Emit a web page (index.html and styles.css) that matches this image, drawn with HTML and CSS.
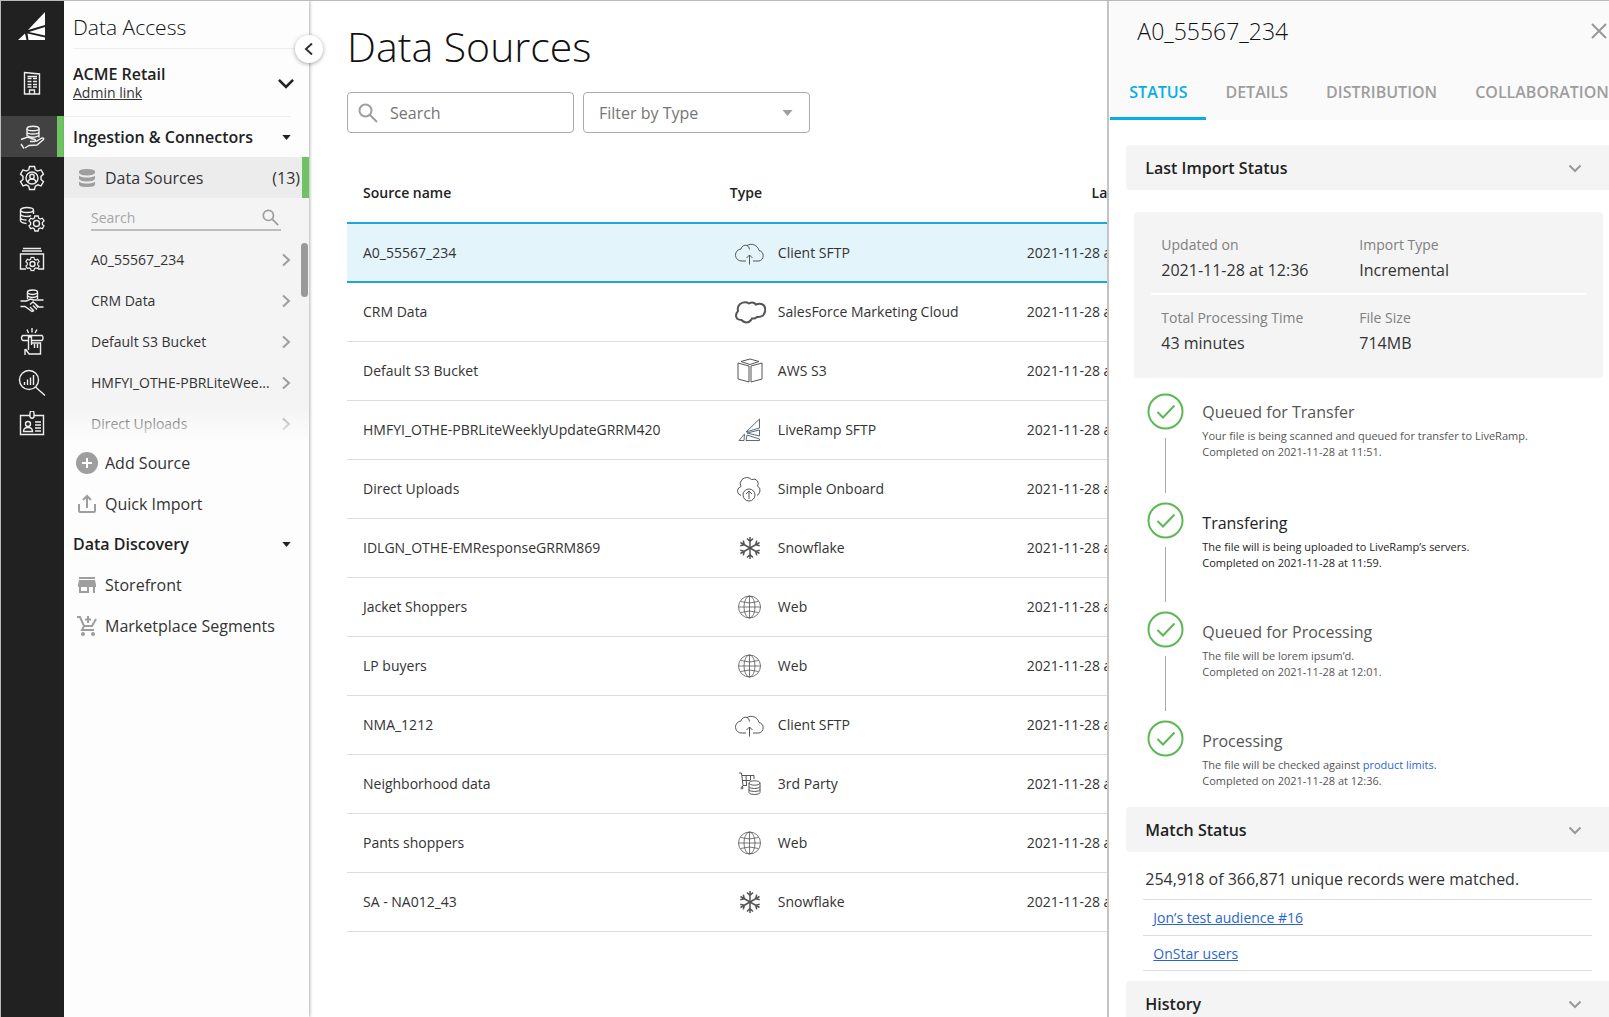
FILE: index.html
```html
<!DOCTYPE html>
<html lang="en">
<head>
<meta charset="utf-8">
<meta name="viewport" content="width=device-width, initial-scale=1.0">
<title>Data Sources</title>
<link rel="stylesheet" href="styles.css">
</head>
<body>
<svg class="sprite" aria-hidden="true">
    <symbol id="cloud-up" viewBox="0 0 36 36">
        <path d="M16 26H12a6 6 0 0 1-1-12 4.500 4.500 0 0 1 6-3.500 8 8 0 0 1 12 5 5.400 5.400 0 0 1 0 10.500H23M17 10.500q2.500 1.200 2.500 4M19.500 29.500V20M16.500 23l3-3 3 3"/>
    </symbol>
    <symbol id="salesforce" viewBox="0 0 36 36">
        <path stroke-width="2" d="M19 9.500q4-2.500 7 1 5-2 8 1 3 5-1 10-3 2-6 1.500-2 2-5 1.500-2 4-6 4-3-.8-4.500-2.500-5 0-5.500-4 0-3 2-5-1-4 2-7 5-3 9-.5z"/>
    </symbol>
    <symbol id="s3" viewBox="0 0 36 36">
        <path d="M11 8.500l9-2.500 9 2.500-9 3zM8 10l11 3v16L8 26zM32 10l-11 3v16l11-3z"/>
    </symbol>
    <symbol id="ramp" viewBox="0 0 36 36">
        <path stroke="#5d6b78" d="M29.500 7v9L16 20zM29.500 18v6L17 21zM17 23l12.500 4v1.500H16zM14.500 22l-5.500 6.500h5z"/>
    </symbol>
    <symbol id="onboard" viewBox="0 0 36 36">
        <path d="M11 24.500Q7 23 7.500 19.500 8 16.500 11 15.500 8.500 12 12 8.500q5-4 9.500 0 4-1.500 6 1.500 1.500 3 0 5 3 2 2.500 5-.5 3-3 4.500"/>
        <circle cx="19" cy="24" r="6"/>
        <path d="M19 28v-8M16 23l3-3 3 3"/>
    </symbol>
    <symbol id="snow" viewBox="0 0 36 36">
        <g stroke-width="1.5">
            <path id="flake-arm" d="M20 18V7M17 8.500l3 3 3-3"/>
            <use href="#flake-arm" transform="rotate(60 20 18)"/>
            <use href="#flake-arm" transform="rotate(120 20 18)"/>
            <use href="#flake-arm" transform="rotate(180 20 18)"/>
            <use href="#flake-arm" transform="rotate(240 20 18)"/>
            <use href="#flake-arm" transform="rotate(300 20 18)"/>
        </g>
    </symbol>
    <symbol id="globe" viewBox="0 0 36 36">
        <g stroke-width=".8">
            <circle cx="19.500" cy="18" r="11"/>
            <ellipse cx="19.500" cy="18" rx="5.500" ry="11"/>
            <path d="M19.500 7v22M8.500 18h22M10.500 12.500q9 3 18 0M10.500 23.500q9-3 18 0"/>
        </g>
    </symbol>
    <symbol id="cart-db" viewBox="0 0 36 36">
        <path d="M9 7h2.500l1.500 12.500h4M12 9.500h12v3.500M12.500 14.500H20M16 9.500l.5 10M20.500 9.500v5M13 19.500l-1 2"/>
        <circle cx="12" cy="22" r="1"/>
        <ellipse cx="24.500" cy="17" rx="5.500" ry="2.200"/>
        <path d="M19 17v9.500q0 2 5.500 2t5.500-2V17M19 20.500q0 2 5.500 2t5.500-2M19 23.500q0 2 5.500 2t5.500-2"/>
    </symbol>
    <symbol id="chev-right" viewBox="0 0 14 14"><path d="M4 1.500L10 7l-6 5.500"/></symbol>
    <symbol id="chev-down" viewBox="0 0 14 14"><path d="M1.500 4.500L7 10l5.500-5.500"/></symbol>
    <symbol id="caret" viewBox="0 0 10 6"><path d="M0 0h10L5 6z"/></symbol>
    <symbol id="lens" viewBox="0 0 20 20"><circle cx="7.500" cy="7.500" r="6"/><path d="M12 12l7 7"/></symbol>
    <symbol id="gear" viewBox="0 0 26 26">
        <path d="M10.500 1.500h5l.8 3.300 2.500 1.300 3.200-1.200 2.500 4.200-2.500 2.300v3l2.500 2.300-2.500 4.200-3.200-1.100-2.500 1.400-.8 3.300h-5l-.8-3.300-2.500-1.400L4 20.900l-2.500-4.200L4 14.400v-3L1.500 9.100 4 4.900l3.200 1.200 2.500-1.300z"/>
    </symbol>
    <symbol id="done" viewBox="0 0 38 38"><circle cx="18.500" cy="18.500" r="17"/><path d="M10.500 19l5.500 5.500L27.500 12.500"/></symbol>
</svg>

<div class="app">
    <nav class="rail" aria-label="Main">
        <a class="rail-logo" href="#" aria-label="Home">
            <svg width="28" height="28" viewBox="0 0 28 28"><path d="M27 0v13L10 18zM27 15v8.500L11 20zM9.500 21.500L27 25.500V28H10.500zM7 21.500l1.500 6.500H0z"/></svg>
        </a>
        <a class="rail-org" href="#" aria-label="Organization">
            <svg width="26" height="26" viewBox="0 0 26 26"><path d="M5.500 2.500l15 1.500v20h-15zM8.500 8.500h4M14 8.500h4M8.500 11.500h4M14 11.500h4M8.500 14.500h4M14 14.500h4M8.500 6.500h9.500M8.500 17h4M14 17h4M10.500 24v-4h5v4"/></svg>
        </a>
        <a class="rail-item active" href="#" aria-label="Data access">
            <svg width="26" height="26" viewBox="0 0 26 26"><ellipse cx="14" cy="4.500" rx="6" ry="2.300"/><path d="M8 4.500v8M20 4.500v9M8 8q0 2 6 2t6-2M8 11.500q6 3.500 12 0M2 15.500l4-1.500q3-1.500 6 .5l4 1q1.500 1-.5 2H11M17 17.500l6-3.500q2.500-.3 1.500 1.500L18 21l-8 .5L6 24M2 20l3 4.500"/></svg>
        </a>
        <a class="rail-item" href="#" aria-label="Identity">
            <svg width="26" height="26" viewBox="0 0 26 26"><use href="#gear"/><circle cx="13" cy="13" r="6"/><circle cx="13" cy="11.500" r="2.200"/><path d="M9 17q.5-3 4-3t4 3"/></svg>
        </a>
        <a class="rail-item" href="#" aria-label="Data settings">
            <svg width="26" height="26" viewBox="0 0 26 26"><ellipse cx="8" cy="4" rx="6.500" ry="2.500"/><path d="M1.500 4v11q1 2 6 2.500M14.500 4v4M1.500 8q1 2.500 6.500 2.500 3 0 4-1M1.500 12q1 2 6 2"/><use href="#gear" x="9" y="9" width="17" height="17" stroke-width="2"/><circle cx="17.500" cy="17.500" r="3"/></svg>
        </a>
        <a class="rail-item" href="#" aria-label="Workflows">
            <svg width="26" height="26" viewBox="0 0 26 26"><path d="M4 1.500h18M3 4h20M7 22H1.500V7h23v15H19"/><use href="#gear" x="6" y="9.500" width="15" height="15" stroke-width="2"/><circle cx="13.500" cy="17" r="2.500"/></svg>
        </a>
        <a class="rail-item" href="#" aria-label="Collaboration">
            <svg width="26" height="26" viewBox="0 0 26 26"><path d="M8.500 11V4q0-2 5-2t5 2v7M8.500 5q5 3 10 0M8.500 8q5 3 10 0M1.500 13h6l4-2 3 1h10M1.500 18.500H6l7 5 2-1M24.500 19H20l-6-5-3 2.500M11 19l4 4M14 17.500l4 4M16.500 16l2.500 3.500"/></svg>
        </a>
        <a class="rail-item" href="#" aria-label="Activation">
            <svg width="26" height="28" viewBox="0 0 26 28"><path d="M9.500 5L8 1.500M13 4.500V0M16 5l2-3.500M9 12.500H4Q2.500 12 2.500 10T4 7.500h19q1 .5 1 2.500t-1 2.500H13M9.500 22V9h3v8M13 15h8.500v11H10l-3.500-5M15.500 16v4M18.500 16v4M6 21v6"/></svg>
        </a>
        <a class="rail-item" href="#" aria-label="Measurement">
            <svg width="28" height="28" viewBox="0 0 28 28"><circle cx="11" cy="11" r="9.500"/><path d="M17.500 18L27 26.500M6.500 16v-3M9.500 16v-5.500M12.500 16V8.500M15.500 16V6"/></svg>
        </a>
        <a class="rail-item" href="#" aria-label="Account">
            <svg width="26" height="26" viewBox="0 0 26 26"><path d="M11 4.500H1.500v19h23v-19H15M11 6V2q0-2 2-2t2 2v4q-2 2.500-4 0M16 11h6M16 14h6M16 17h6M16 20h6M4.500 20.500q0-4 4.500-4t4.500 4z"/><circle cx="9" cy="13" r="2.500"/></svg>
        </a>
    </nav>

    <aside class="side">
        <button class="collapse" type="button" aria-label="Collapse menu"><svg width="14" height="14"><use href="#chev-right"/></svg></button>
        <h2 class="side-title">Data Access</h2>
        <div class="account">
            <div>
                <strong>ACME Retail</strong>
                <a href="#">Admin link</a>
            </div>
            <button type="button" aria-label="Switch account"><svg width="18" height="18"><use href="#chev-down"/></svg></button>
        </div>
        <button class="group" type="button">Ingestion &amp; Connectors <svg width="9" height="5"><use href="#caret"/></svg></button>
        <a class="side-link current" href="#">
            <svg width="22" height="22" viewBox="0 0 22 22"><path d="M3 4.500Q3 2 11 2t8 2.500V6q-2 2.500-8 2.500T3 6zM3 8.500q2 2 8 2t8-2V12q-2 2.500-8 2.500T3 12zM3 14.500q2 2 8 2t8-2v3Q19 20 11 20t-8-2.500z"/></svg>
            <span>Data Sources</span>
            <span class="count">(13)</span>
        </a>
        <div class="sources">
            <label class="side-search">
                <input type="text" placeholder="Search" aria-label="Search sources">
                <svg width="17" height="17"><use href="#lens"/></svg>
            </label>
            <ul>
                <li><a href="#"><span>A0_55567_234</span><svg width="14" height="14"><use href="#chev-right"/></svg></a></li>
                <li><a href="#"><span>CRM Data</span><svg width="14" height="14"><use href="#chev-right"/></svg></a></li>
                <li><a href="#"><span>Default S3 Bucket</span><svg width="14" height="14"><use href="#chev-right"/></svg></a></li>
                <li><a href="#"><span>HMFYI_OTHE-PBRLiteWee...</span><svg width="14" height="14"><use href="#chev-right"/></svg></a></li>
                <li><a href="#"><span>Direct Uploads</span><svg width="14" height="14"><use href="#chev-right"/></svg></a></li>
            </ul>
            <div class="scroll-thumb"></div>
        </div>
        <a class="side-link" href="#">
            <svg width="22" height="22" viewBox="0 0 22 22"><circle cx="11" cy="11" r="11"/><path class="plus" d="M11 6v10M6 11h10"/></svg>
            <span>Add Source</span>
        </a>
        <a class="side-link" href="#">
            <svg class="outline" width="22" height="22" viewBox="0 0 22 22"><path d="M3 11v7q0 1 1 1h14q1 0 1-1v-7M11 15V3M7 7l4-4 4 4"/></svg>
            <span>Quick Import</span>
        </a>
        <button class="group" type="button">Data Discovery <svg width="9" height="5"><use href="#caret"/></svg></button>
        <a class="side-link" href="#">
            <svg width="22" height="22" viewBox="0 0 22 22"><path d="M3 3h16v2H3zM3 6h16l1 5v2h-1v6h-2v-6h-4v6H3v-6H2v-2zM5 13v4h6v-4z" fill-rule="evenodd"/></svg>
            <span>Storefront</span>
        </a>
        <a class="side-link" href="#">
            <svg class="outline" width="22" height="22" viewBox="0 0 22 22"><path d="M1 2h3l4 9h8l4-7M8 11l-2 4h12M12 1v7M9 4.500h6"/><circle class="dot" cx="7" cy="19" r="2"/><circle class="dot" cx="17" cy="19" r="2"/></svg>
            <span>Marketplace Segments</span>
        </a>
    </aside>

    <main class="main">
        <h1>Data Sources</h1>
        <div class="filters">
            <label class="field">
                <svg width="20" height="20"><use href="#lens"/></svg>
                <input type="text" placeholder="Search" aria-label="Search">
            </label>
            <label class="field">
                <select aria-label="Filter by Type"><option>Filter by Type</option></select>
                <svg class="field-caret" width="11" height="6"><use href="#caret"/></svg>
            </label>
        </div>
        <table class="grid">
            <thead>
                <tr><th class="col-name">Source name</th><th>Type</th><th class="col-date">La</th></tr>
            </thead>
            <tbody>
                <tr class="selected"><td>A0_55567_234</td><td><div class="type"><svg><use href="#cloud-up"/></svg>Client SFTP</div></td><td class="col-date">2021-11-28 a</td></tr>
                <tr><td>CRM Data</td><td><div class="type"><svg><use href="#salesforce"/></svg>SalesForce Marketing Cloud</div></td><td class="col-date">2021-11-28 a</td></tr>
                <tr><td>Default S3 Bucket</td><td><div class="type"><svg><use href="#s3"/></svg>AWS S3</div></td><td class="col-date">2021-11-28 a</td></tr>
                <tr><td>HMFYI_OTHE-PBRLiteWeeklyUpdateGRRM420</td><td><div class="type"><svg><use href="#ramp"/></svg>LiveRamp SFTP</div></td><td class="col-date">2021-11-28 a</td></tr>
                <tr><td>Direct Uploads</td><td><div class="type"><svg><use href="#onboard"/></svg>Simple Onboard</div></td><td class="col-date">2021-11-28 a</td></tr>
                <tr><td>IDLGN_OTHE-EMResponseGRRM869</td><td><div class="type"><svg><use href="#snow"/></svg>Snowflake</div></td><td class="col-date">2021-11-28 a</td></tr>
                <tr><td>Jacket Shoppers</td><td><div class="type"><svg><use href="#globe"/></svg>Web</div></td><td class="col-date">2021-11-28 a</td></tr>
                <tr><td>LP buyers</td><td><div class="type"><svg><use href="#globe"/></svg>Web</div></td><td class="col-date">2021-11-28 a</td></tr>
                <tr><td>NMA_1212</td><td><div class="type"><svg><use href="#cloud-up"/></svg>Client SFTP</div></td><td class="col-date">2021-11-28 a</td></tr>
                <tr><td>Neighborhood data</td><td><div class="type"><svg><use href="#cart-db"/></svg>3rd Party</div></td><td class="col-date">2021-11-28 a</td></tr>
                <tr><td>Pants shoppers</td><td><div class="type"><svg><use href="#globe"/></svg>Web</div></td><td class="col-date">2021-11-28 a</td></tr>
                <tr><td>SA - NA012_43</td><td><div class="type"><svg><use href="#snow"/></svg>Snowflake</div></td><td class="col-date">2021-11-28 a</td></tr>
            </tbody>
        </table>
    </main>

    <section class="drawer" aria-label="Source details">
        <header class="drawer-head">
            <div class="drawer-title">
                <h2>A0_55567_234</h2>
                <button type="button" aria-label="Close"><svg width="16" height="16" viewBox="0 0 16 16"><path d="M1 1l14 14M15 1L1 15"/></svg></button>
            </div>
            <div class="tabs" role="tablist">
                <button class="active" type="button" role="tab" aria-selected="true">STATUS</button>
                <button type="button" role="tab">DETAILS</button>
                <button type="button" role="tab">DISTRIBUTION</button>
                <button type="button" role="tab">COLLABORATION</button>
            </div>
        </header>

        <button class="accordion" type="button">Last Import Status <svg width="14" height="14"><use href="#chev-down"/></svg></button>
        <div class="summary">
            <dl>
                <div><dt>Updated on</dt><dd>2021-11-28 at 12:36</dd></div>
                <div><dt>Import Type</dt><dd>Incremental</dd></div>
            </dl>
            <dl>
                <div><dt>Total Processing Time</dt><dd>43 minutes</dd></div>
                <div><dt>File Size</dt><dd>714MB</dd></div>
            </dl>
        </div>
        <ol class="steps">
            <li>
                <svg><use href="#done"/></svg>
                <div><h3>Queued for Transfer</h3><p>Your file is being scanned and queued for transfer to LiveRamp.</p><p>Completed on 2021-11-28 at 11:51.</p></div>
            </li>
            <li class="strong">
                <svg><use href="#done"/></svg>
                <div><h3>Transfering</h3><p>The file will is being uploaded to LiveRamp’s servers.</p><p>Completed on 2021-11-28 at 11:59.</p></div>
            </li>
            <li>
                <svg><use href="#done"/></svg>
                <div><h3>Queued for Processing</h3><p>The file will be lorem ipsum’d.</p><p>Completed on 2021-11-28 at 12:01.</p></div>
            </li>
            <li>
                <svg><use href="#done"/></svg>
                <div><h3>Processing</h3><p>The file will be checked against <a href="#">product limits.</a></p><p>Completed on 2021-11-28 at 12:36.</p></div>
            </li>
        </ol>

        <button class="accordion" type="button">Match Status <svg width="14" height="14"><use href="#chev-down"/></svg></button>
        <div class="match">
            <p>254,918 of 366,871 unique records were matched.</p>
            <ul>
                <li><a href="#">Jon’s test audience #16</a></li>
                <li><a href="#">OnStar users</a></li>
            </ul>
        </div>

        <button class="accordion" type="button">History <svg width="14" height="14"><use href="#chev-down"/></svg></button>
    </section>
</div>
</body>
</html>
```

FILE: styles.css
```css
* {
    box-sizing: border-box;
}

body {
    margin: 0;
    color: #333;
    font-family: "Open Sans", "Noto Sans", sans-serif;
    font-size: 14px;
    line-height: 20px;
    background: #fff;
}

h1, h2, h3, p, ul, ol, dl, dd {
    margin: 0;
    padding: 0;
}

ul, ol {
    list-style: none;
}

a {
    color: inherit;
    text-decoration: none;
}

button, input, select {
    margin: 0;
    padding: 0;
    border: 0;
    background: none;
    color: inherit;
    font: inherit;
}

svg {
    flex: none;
    fill: none;
    stroke: currentColor;
}

.sprite {
    position: absolute;
    width: 0;
    height: 0;
}

.app {
    display: grid;
    grid-template-columns: 63px 245px minmax(0, 1fr) 31.2%;
    height: 100vh;
    overflow: hidden;
    border-top: 1px solid #bbb;
    border-left: 1px solid #bbb;
}

/* icon rail */
.rail {
    display: flex;
    flex-direction: column;
    background: #212121;
    color: #eee;
}

.rail a {
    display: flex;
    align-items: center;
    justify-content: center;
    height: 41px;
    flex: none;
    padding-right: 1px;
    stroke-width: 1.4;
}

.rail .rail-logo {
    height: 49px;
}

.rail-logo svg {
    fill: #fff;
    stroke: none;
}

.rail .rail-org {
    height: 66px;
}

.rail .active {
    background: #424242;
    box-shadow: inset -7px 0 #6fc363;
}

/* side menu */
.side {
    position: relative;
    z-index: 1;
    background: #fdfdfd;
    box-shadow: 1px 0 3px rgba(0, 0, 0, 0.3);
}

.side-title {
    margin-left: 9px;
    padding: 14px 0 9px;
    border-bottom: 1px solid #eee;
    color: #111;
    font-size: 21px;
    font-weight: 300;
    line-height: 24px;
}

.collapse {
    position: absolute;
    top: 34px;
    right: -14px;
    display: flex;
    align-items: center;
    justify-content: center;
    width: 28px;
    height: 28px;
    border-radius: 50%;
    background: #fff;
    box-shadow: 0 1px 4px rgba(0, 0, 0, 0.35);
    stroke-width: 2;
}

.collapse svg {
    transform: rotate(180deg);
}

.account {
    display: flex;
    align-items: center;
    justify-content: space-between;
    height: 68px;
    margin-right: 18px;
    padding-left: 9px;
    border-bottom: 1px solid #eee;
}

.account strong {
    display: block;
    color: #222;
    font-size: 16px;
    font-weight: 600;
}

.account a {
    display: block;
    line-height: 18px;
    text-decoration: underline;
}

.account button {
    display: flex;
    margin-right: -4px;
    color: #222;
    stroke-width: 2;
}

.group {
    display: flex;
    align-items: center;
    justify-content: space-between;
    width: 100%;
    height: 40px;
    padding: 0 18px 0 9px;
    color: #222;
    font-size: 16px;
    font-weight: 600;
}

.group svg, .field-caret {
    fill: currentColor;
    stroke: none;
}

.side-link {
    display: flex;
    align-items: center;
    gap: 7px;
    height: 41px;
    padding-left: 12px;
    font-size: 16px;
}

.side-link svg {
    fill: #9e9e9e;
    stroke: none;
}

.side-link .plus {
    stroke: #fff;
    stroke-width: 2;
}

.side-link .outline {
    fill: none;
    stroke: #9e9e9e;
    stroke-width: 2;
}

.side-link .dot {
    fill: #9e9e9e;
    stroke: none;
}

.current {
    padding-right: 9px;
    background: #ececec;
    box-shadow: inset -7px 0 #6fc363;
}

.count {
    margin-left: auto;
}

.sources {
    position: relative;
    height: 244px;
    overflow: hidden;
    background: #f4f4f4;
}

/* the list fades out where it is cut off */
.sources::after {
    content: "";
    position: absolute;
    right: 0;
    bottom: 0;
    left: 0;
    height: 36px;
    background: linear-gradient(rgba(253, 253, 253, 0), #fdfdfd);
}

.side-search {
    display: flex;
    align-items: center;
    height: 33px;
    margin: 0 28px 8px 27px;
    padding-top: 8px;
    padding-right: 2px;
    border-bottom: 2px solid #bdbdbd;
    color: #9e9e9e;
    stroke-width: 2;
}

.side-search input {
    flex: 1;
    min-width: 0;
}

input {
    outline: none;
}

.side-search input::placeholder {
    color: #a6a6a6;
}

.sources li a {
    display: flex;
    align-items: center;
    justify-content: space-between;
    height: 41px;
    padding: 0 16px 0 27px;
}

.sources li svg {
    color: #9e9e9e;
    stroke-width: 2;
}

.scroll-thumb {
    position: absolute;
    top: 45px;
    right: 1px;
    width: 7px;
    height: 54px;
    border-radius: 4px;
    background: #999;
}

/* source list */
.main {
    padding: 17px 0 0 38px;
    overflow: hidden;
}

.main h1 {
    color: #111;
    font-size: 41px;
    font-weight: 300;
    line-height: 56px;
}

.filters {
    display: flex;
    gap: 9px;
    margin-top: 18px;
}

.field {
    display: flex;
    align-items: center;
    gap: 12px;
    flex: 0 1 227px;
    min-width: 0;
    height: 41px;
    padding: 0 16px 0 10px;
    border: 1px solid #aaa;
    border-radius: 4px;
    color: #9e9e9e;
    font-size: 16px;
    stroke-width: 2;
}

.field input, .field select {
    flex: 1;
    min-width: 0;
    color: #757575;
}

.field input::placeholder {
    color: #757575;
}

.field select {
    padding-left: 5px;
    appearance: none;
}

/* runs a little way under the drawer */
.grid {
    width: calc(100% + 4px);
    margin-top: 30px;
    border-collapse: collapse;
}

.grid th, .grid td {
    height: 59px;
    padding: 0 0 0 16px;
    border-bottom: 1px solid #ddd;
    text-align: left;
}

.grid th {
    height: 60px;
    border-bottom: 2px solid #1ba8dc;
    color: #222;
    font-weight: 600;
}

.grid .col-name {
    width: 48%;
}

.grid .col-date {
    padding: 0;
    text-align: right;
}

.grid th.col-date {
    padding-right: 4px;
}

.grid .selected td {
    border-bottom: 2px solid #1ba8dc;
    background: #e3f4fa;
}

.type {
    display: flex;
    align-items: center;
    gap: 12px;
}

.type svg {
    width: 36px;
    height: 36px;
    color: #555;
}

/* details drawer */
.drawer {
    z-index: 1;
    display: flex;
    flex-direction: column;
    overflow: hidden;
    padding-left: 1px;
    border-left: 2px solid #c4c4c4;
    background: #fff;
}

.drawer-head {
    flex: none;
    background: #fafafa;
}

.drawer-title {
    display: flex;
    align-items: center;
    justify-content: space-between;
    height: 60px;
    padding: 0 2px 0 27px;
}

.drawer-title h2 {
    color: #111;
    font-size: 23px;
    font-weight: 300;
}

.drawer-title button {
    display: flex;
    color: #999;
    stroke-width: 2;
}

.tabs {
    display: flex;
}

.tabs button {
    height: 59px;
    padding: 5px 19px 0;
    border-bottom: 3px solid transparent;
    color: #9e9e9e;
    font-size: 16px;
    font-weight: 600;
}

.tabs .active {
    border-bottom-color: #06aee5;
    color: #06aee5;
}

.accordion {
    display: flex;
    align-items: center;
    justify-content: space-between;
    flex: none;
    height: 45px;
    margin-left: 16px;
    padding: 0 27px 0 19px;
    border-radius: 4px 0 0 4px;
    background: #f4f4f4;
    color: #222;
    font-size: 16px;
    font-weight: 600;
}

.accordion svg {
    color: #999;
    stroke-width: 2;
}

.drawer-head + .accordion {
    margin-top: 25px;
}

.summary {
    flex: none;
    margin: 22px 6px 15px 24px;
    padding: 10px 17px 14px;
    border-radius: 4px;
    background: #f4f4f4;
}

.summary dl {
    display: grid;
    grid-template-columns: 198px 1fr;
    height: 71px;
    padding: 13px 0 0 10px;
}

.summary dl + dl {
    border-top: 2px solid #fff;
}

.summary dt {
    color: #808080;
    line-height: 20px;
}

.summary dd {
    padding-top: 3px;
    font-size: 16px;
    line-height: 24px;
}

.steps {
    flex: none;
    margin-left: 37px;
}

.steps li {
    position: relative;
    display: flex;
    gap: 17px;
    height: 109px;
    color: #555;
}

.steps li + li div {
    padding-top: 9px;
}

.steps li:last-child {
    height: 87px;
}

/* connector between two steps */
.steps li:not(:last-child)::after {
    content: "";
    position: absolute;
    top: 45px;
    bottom: 9px;
    left: 18px;
    width: 1px;
    background: #aaa;
}

.steps svg {
    width: 38px;
    height: 38px;
    color: #5cb855;
    stroke-width: 2;
}

.steps div {
    padding-top: 7px;
}

.steps h3 {
    padding-bottom: 4px;
    font-size: 16px;
    font-weight: 400;
    line-height: 24px;
}

.steps p {
    font-size: 11px;
    line-height: 16px;
}

.steps .strong {
    color: #222;
}

.steps a {
    color: #2a66d0;
}

.match {
    flex: none;
    margin: 0 17px 10px 33px;
}

.match p {
    padding: 15px 0 8px 2px;
    font-size: 16px;
    line-height: 24px;
}

.match li {
    height: 36px;
    padding: 8px 10px;
    border-top: 1px solid #ddd;
}

.match li:last-child {
    border-bottom: 1px solid #ddd;
}

.match a {
    color: #2a66d0;
    text-decoration: underline;
}
```
